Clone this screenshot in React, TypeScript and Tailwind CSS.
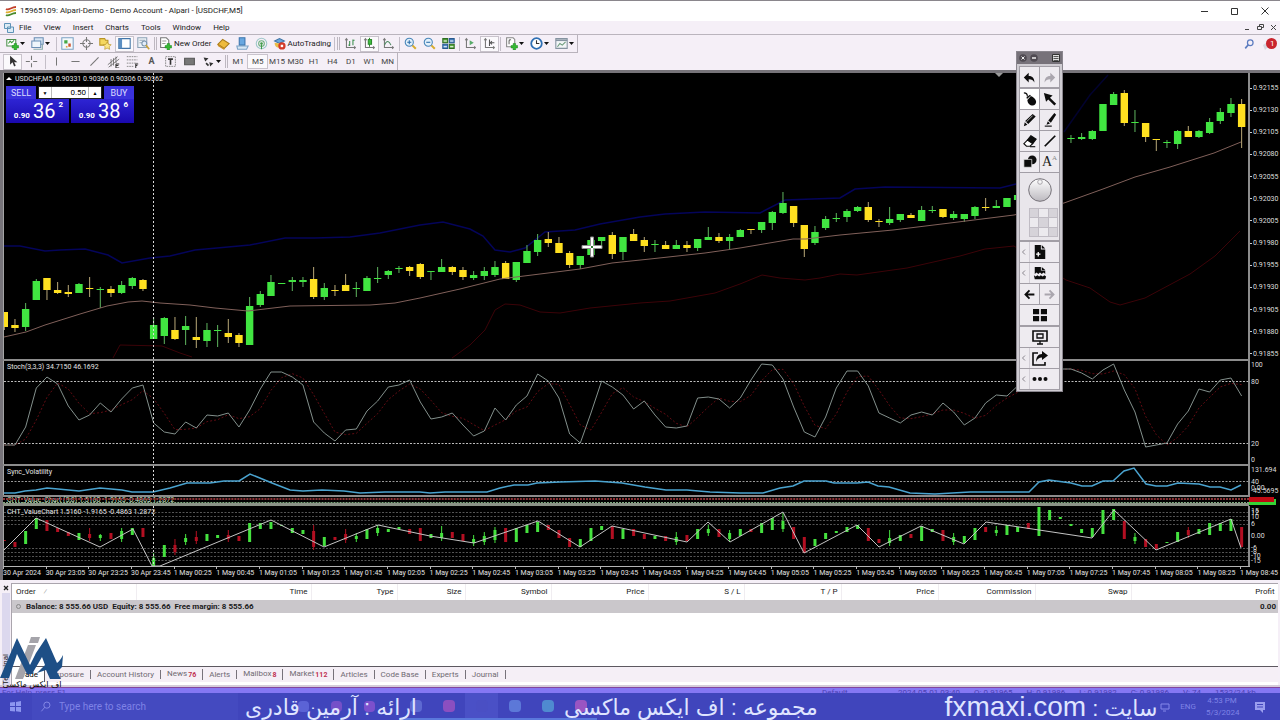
import { ReactNode } from "react";
import clsx from "clsx";

const STEP = 32 / 3;
const px = (i: number) => 4.3 + i * STEP;

// up/down, high, body top, body bottom, low
type Bar = [number, number, number, number, number];

const candles: (Bar | null)[] = [
  [0, 312, 312, 327, 330], [0, 319, 325, 328, 332], [1, 303, 309, 327, 331], [1, 279, 281, 300, 300],
  [0, 278, 278, 290, 300], [0, 282, 290, 293, 294], [0, 285, 292, 294, 297], [1, 283, 284, 293, 293],
  [0, 277, 288, 289, 297], [1, 287, 289, 290, 308], [0, 286, 289, 293, 297], [1, 281, 285, 293, 294],
  [1, 277, 278, 286, 289], [0, 279, 280, 289, 291], [1, 317, 325, 339, 339], [1, 317, 318, 336, 344],
  [0, 317, 330, 339, 340], [1, 316, 326, 330, 345], [0, 317, 337, 340, 348], [1, 323, 330, 341, 347],
  [1, 325, 330, 331, 347], [0, 319, 333, 337, 343], [0, 333, 335, 343, 347], [1, 297, 306, 345, 345],
  [1, 291, 294, 305, 307], [1, 275, 282, 296, 296], [1, 283, 283, 284, 284], [1, 277, 280, 282, 291],
  [1, 277, 280, 282, 287], [0, 267, 279, 297, 299], [1, 283, 288, 297, 300], [0, 285, 290, 291, 296],
  [0, 274, 285, 291, 291], [1, 282, 288, 289, 297], [1, 276, 278, 291, 291], [1, 267, 278, 279, 283],
  [1, 270, 271, 275, 279], [1, 266, 268, 269, 273], [0, 266, 267, 271, 276], [0, 263, 264, 277, 279],
  [1, 271, 271, 272, 280], [1, 259, 267, 272, 272], [0, 266, 267, 272, 275], [0, 267, 270, 277, 280],
  [1, 271, 275, 278, 280], [1, 267, 271, 276, 280], [1, 261, 267, 275, 277], [0, 261, 263, 279, 279],
  [1, 262, 262, 280, 282], [1, 245, 251, 263, 263], [1, 234, 240, 252, 256], [0, 232, 239, 243, 247],
  [0, 237, 243, 253, 253], [0, 251, 253, 265, 268], [1, 256, 256, 265, 269], [1, 238, 240, 255, 257],
  [1, 237, 237, 241, 245], [0, 232, 235, 254, 259], [1, 237, 237, 252, 260], [0, 229, 234, 241, 241],
  [0, 237, 240, 246, 252], [1, 240, 244, 245, 252], [0, 241, 245, 249, 249], [1, 240, 245, 249, 249],
  [0, 241, 245, 248, 252], [1, 239, 239, 248, 251], [1, 227, 237, 240, 240], [0, 233, 237, 241, 243],
  [1, 234, 237, 241, 249], [1, 229, 230, 237, 237], [0, 229, 229, 230, 234], [1, 222, 222, 230, 233],
  [1, 211, 212, 223, 230], [1, 192, 203, 213, 214], [0, 206, 206, 223, 227], [0, 225, 225, 249, 257],
  [1, 226, 232, 243, 245], [1, 216, 219, 228, 230], [1, 213, 218, 219, 222], [1, 209, 211, 217, 222],
  [1, 206, 207, 211, 212], [0, 202, 207, 220, 222], [0, 219, 221, 222, 227], [1, 207, 219, 223, 225],
  [1, 214, 214, 220, 222], [0, 213, 215, 218, 218], [1, 206, 210, 221, 221], [1, 206, 210, 211, 213],
  [0, 209, 209, 217, 218], [1, 211, 214, 218, 220], [1, 214, 214, 219, 222], [1, 206, 207, 216, 219],
  [0, 198, 207, 208, 211], [1, 200, 206, 208, 208], [1, 198, 198, 207, 207], [1, 194, 195, 200, 200],
  null, null, null, null,
  [1, 135, 138, 139, 143], [1, 133, 137, 139, 140], [1, 130, 131, 139, 140], [1, 104, 104, 131, 131],
  [1, 92, 94, 105, 105], [0, 90, 93, 123, 126], [1, 110, 122, 123, 132], [0, 123, 123, 137, 142],
  [0, 139, 139, 140, 151], [1, 140, 142, 143, 148], [1, 130, 131, 144, 149], [0, 126, 131, 137, 137],
  [1, 130, 131, 137, 138], [1, 118, 122, 133, 134], [1, 108, 112, 121, 124], [1, 98, 104, 113, 117],
  [0, 99, 104, 127, 148],
];

const stoch = [
  445, 445, 427, 388, 377, 384, 406, 420, 415, 403, 412, 399, 388, 385, 423, 432, 434, 422, 428, 415,
  416, 413, 427, 410, 389, 372, 372, 377, 385, 422, 433, 441, 430, 429, 411, 401, 387, 385, 380, 402,
  419, 417, 413, 425, 436, 431, 408, 420, 405, 396, 374, 381, 398, 434, 443, 413, 381, 387, 395, 409,
  401, 415, 427, 428, 426, 398, 397, 399, 408, 398, 380, 364, 365, 379, 407, 432, 437, 417, 388, 371,
  371, 386, 413, 418, 423, 415, 412, 415, 403, 412, 425, 418, 403, 395, 396, 386, 375, 370, 369, 369,
  369, 373, 379, 370, 364, 390, 412, 447, 445, 443, 424, 411, 389, 392, 380, 378, 396,
];

// up/down, top, bottom, wick top
const valueBars: [number, number, number, number?][] = [
  [0, 540, 541], [0, 542, 547], [1, 531, 544], [1, 518, 529], [0, 520, 531], [0, 528, 532], [0, 532, 536],
  [1, 533, 540], [0, 534, 538, 528], [1, 535, 538, 534], [0, 533, 539], [1, 531, 539, 528], [1, 528, 535],
  [0, 528, 537], [1, 558, 566, 553], [1, 545, 557], [0, 545, 552, 539], [1, 538, 542, 534],
  [0, 537, 541, 531], [1, 534, 541], [1, 535, 538], [0, 535, 539, 530], [0, 536, 541], [1, 523, 542],
  [1, 523, 529], [1, 522, 529], [1, 525, 526], [1, 528, 533], [1, 530, 534], [0, 531, 547, 525],
  [1, 537, 546], [0, 537, 540], [0, 534, 540, 529], [1, 536, 539, 533], [1, 529, 539], [1, 528, 533, 525],
  [1, 529, 532], [1, 527, 529], [0, 529, 534], [0, 528, 541], [1, 534, 538], [1, 533, 538, 526],
  [0, 532, 538], [0, 534, 541], [1, 539, 543, 535], [1, 536, 542, 532], [1, 530, 540, 527],
  [0, 528, 542], [1, 528, 542], [1, 525, 533], [1, 522, 532], [0, 525, 530], [0, 530, 538], [0, 538, 547],
  [1, 539, 547], [1, 528, 541], [1, 526, 530], [0, 526, 539], [1, 529, 539], [0, 529, 536], [0, 534, 539],
  [1, 536, 539], [0, 536, 541], [1, 537, 542, 532], [0, 535, 541], [1, 529, 539], [1, 529, 533, 525],
  [0, 529, 537], [1, 533, 539, 530], [1, 529, 536], [0, 529, 532], [1, 523, 533], [1, 518, 530],
  [1, 521, 529, 513], [0, 527, 539], [0, 537, 553], [1, 539, 546], [1, 533, 539], [1, 531, 533],
  [1, 527, 532], [1, 525, 529], [0, 528, 541], [0, 539, 543], [1, 538, 543, 530], [1, 535, 541],
  [0, 534, 538], [1, 526, 541], [1, 529, 532], [0, 530, 541], [1, 537, 542, 533], [1, 536, 543],
  [1, 528, 540], [0, 527, 532], [1, 530, 533, 526], [1, 525, 535], [1, 527, 532], [0, 523, 529],
  [1, 507, 536], [1, 510, 520], [1, 517, 519], [1, 524, 526], [1, 529, 533], [1, 528, 537],
  [1, 510, 534], [1, 509, 520], [0, 521, 539], [1, 537, 541, 533], [0, 539, 547], [0, 544, 549],
  [1, 542, 543], [1, 532, 542], [0, 530, 535, 527], [1, 529, 534], [1, 523, 535], [1, 523, 531],
  [1, 519, 531], [0, 527, 547],
];

const average =
  "4,337 26,332 45,325 80,314 107,306 128,302 142,301 160,303 190,305 215,308 248,311 290,306 370,305 395,303 420,298 460,289 500,279 540,274 580,269 612,263 650,259 705,253 740,248 793,239 806,239 840,235 893,230 950,223 1014,215 1064,203 1103,189 1135,177 1170,167 1214,153 1241,142";
const upperBand =
  "4,246 20,246 45,251 60,250 85,249 108,255 122,263 150,258 170,256 195,250 250,245 285,238 315,238 350,237 380,233 400,229 420,225 443,222 470,229 483,236 495,250 510,252 525,248 545,232 575,230 600,224 640,217 665,214 705,212 760,213 785,200 840,198 855,189 885,187 1000,188 1016,184";
const upperBandRight = "1064,132 1090,95 1108,75";
const lowerBandLeft = "113,358 120,345 162,346 180,353 192,357";
const lowerBand =
  "452,358 470,345 485,330 495,310 505,304 520,305 540,312 560,313 590,308 640,303 670,301 715,293 740,284 762,275 780,278 805,280 820,278 840,274 857,275 907,268 960,256 985,249 1014,246 1066,280 1090,288 1110,302 1120,305 1145,298 1190,274 1215,256 1240,231";
const volatility =
  "4,493 15,493 25,491 36,490 47,488 58,489 79,491 100,488 122,490 132,492 153,492 170,488 187,483 210,483 224,481 239,481 250,474 272,483 290,490 303,491 322,490 344,491 360,493 385,492 420,492 430,493 445,492 487,492 500,488 514,485 528,485 537,483 560,482 595,481 622,483 645,487 666,490 687,490 710,492 740,493 763,493 780,488 793,486 804,481 826,481 834,483 857,483 868,482 878,486 889,487 910,493 935,494 970,492 1029,492 1039,482 1049,480 1071,483 1082,486 1092,486 1103,481 1113,481 1124,471 1134,468 1146,484 1156,486 1167,486 1178,483 1199,484 1210,487 1220,487 1231,490 1241,485";
const zigzag =
  "4,550 36,518 100,547 133,529 152,566 160,566 271,520 324,547 378,525 430,536 474,543 538,521 580,547 612,526 687,542 708,522 730,542 783,512 804,553 857,525 879,547 921,526 964,544 986,522 1092,538 1114,510 1156,550 1231,519 1241,548";

const prices = Array.from({ length: 13 }, (_, i) => (0.92155 - i * 0.00025).toFixed(5));

const times = ["30 Apr 2024", "30 Apr 23:05", "30 Apr 23:25", "30 Apr 23:45"].concat(
  Array.from({ length: 26 }, (_, i) => {
    const m = 25 + i * 20;
    return `1 May 0${Math.floor(m / 60)}:${String(m % 60).padStart(2, "0")}`;
  })
);

const stochPoints = stoch.map((y, i) => `${px(i)},${y}`).join(" ");
const signalPoints = stoch
  .map((y, i) => `${px(i)},${(y + stoch[Math.max(0, i - 1)] + stoch[Math.max(0, i - 2)]) / 3}`)
  .join(" ");

function Panel({ top, height, label, axis, children }: {
  top: number;
  height: string;
  label?: string;
  axis?: ReactNode;
  children: ReactNode;
}) {
  const h = Number(height.match(/\d+/)![0]);
  return (
    <div className={clsx("flex", height)}>
      <div className="relative min-w-0 flex-1 border-l border-[#a5a5a5]">
        <svg className="block h-full w-full" viewBox={`4 ${top} 1244 ${h}`} preserveAspectRatio="none">
          {children}
          <line x1="153.5" x2="153.5" y1={top} y2={top + h} stroke="#d8d8d8" strokeDasharray="2 2" />
        </svg>
        {label && <div className="absolute left-[3px] top-[2px] whitespace-pre text-[#e4e4e4]">{label}</div>}
      </div>
      <div className="relative w-[32px] border-l-2 border-[#8c8c8c] text-[#dedede]">{axis}</div>
    </div>
  );
}

const Split = () => <div className="mr-[30px] h-[2px] bg-[#8c8c8c]" />;

function Level({ y, color = "#bdbdbd" }: { y: number; color?: string }) {
  return <line x1="4" x2="1248" y1={y} y2={y} stroke={color} strokeDasharray="2 1.5" />;
}

function OneClick() {
  return (
    <div className="absolute left-[3px] top-[13px] w-[128px] text-[#dcdcff]">
      <div className="flex justify-between text-[9px] leading-[12px]">
        <button className="w-[30px] bg-[#3a32dc]">SELL</button>
        <div className="flex w-[64px] items-center border border-[#202020] bg-white text-black">
          <button aria-label="Decrease volume" className="w-[12px] text-[5px] leading-[10px]">▼</button>
          <input aria-label="Volume" defaultValue="0.50" className="h-[11px] w-[38px] border-x border-[#bbb] pr-[2px] text-right text-[8px]" />
          <button aria-label="Increase volume" className="w-[12px] text-[5px] leading-[10px]">▲</button>
        </div>
        <button className="w-[30px] bg-[#3a32dc]">BUY</button>
      </div>
      <div className="flex justify-between text-white">
        {[["36", "2"], ["38", "6"]].map(([big, pip]) => (
          <button key={big} className="flex h-[24px] w-[63px] items-end justify-end gap-[3px] bg-linear-to-b from-[#2e24d4] to-[#1a08ae] pr-[6px]">
            <span className="pb-[3px] text-[8px] font-bold leading-[8px]">0.90</span>
            <span className="text-[20px] leading-[23px]">{big}</span>
            <span className="self-start pt-[2px] text-[8px] font-bold leading-[8px]">{pip}</span>
          </button>
        ))}
      </div>
    </div>
  );
}

function Charts() {
  return (
    <section className="relative border-l-[3px] border-t-[3px] border-[#77747a] bg-black text-[7px] leading-[8px]">
      <div className="relative">
        <Panel
          top={73}
          height="h-[286px]"
          axis={
            <div className="flex h-full flex-col justify-between pb-px pt-[11px]">
              {prices.map((p) => (
                <div key={p} className="flex items-center gap-px">
                  <span className="h-px w-[2px] bg-[#ccc]" />
                  {p}
                </div>
              ))}
            </div>
          }
        >
          <polyline points={upperBand} fill="none" stroke="#04045a" strokeWidth="1.5" />
          <polyline points={upperBandRight} fill="none" stroke="#02022e" strokeWidth="1.5" />
          <polyline points={lowerBandLeft} fill="none" stroke="#3c0308" />
          <polyline points={lowerBand} fill="none" stroke="#3c0308" />
          {candles.map((c, i) => {
            if (!c) return null;
            const [up, high, top, bottom, low] = c;
            return (
              <g key={i} fill={up ? "#41e541" : "#ffe020"}>
                <rect x={px(i) - 0.5} y={high} width="1" height={low - high} fill={up ? "#5fb55f" : "#b9a878"} />
                <rect x={px(i) - 3.7} y={top} width="7.4" height={bottom - top} />
              </g>
            );
          })}
          <polyline points={average} fill="none" stroke="#80605a" />
          <path d="M995 73h8l-4 4z" fill="#9a9a9a" />
          <path d="M590.500 237h3v8.500h8.500v3h-8.500v8.500h-3v-8.500h-8.500v-3h8.500z" fill="#fff" stroke="#8d8d8d" />
          <path d="M591 246h2v2h-2z" fill="#2f7a2f" />
        </Panel>
        <div className="absolute left-[3px] top-[2px] flex items-center gap-[3px] whitespace-pre text-[#e4e4e4]">
          <svg width="6" height="4"><path d="M3 0l3 3H0z" fill="#fff" /></svg>
          {"USDCHF,M5  0.90331 0.90366 0.90306 0.90362"}
        </div>
        <OneClick />
      </div>
      <Split />
      <Panel
        top={361}
        height="h-[103px]"
        label="Stoch(3,3,3) 34.7150 46.1692"
        axis={
          <div>
            <span className="absolute left-px top-0">100</span>
            <span className="absolute left-px top-[17px]">80</span>
            <span className="absolute left-px top-[79px]">20</span>
            <span className="absolute left-px top-[95px]">0</span>
          </div>
        }
      >
        <Level y={381.5} />
        <Level y={443.5} />
        <polyline points={signalPoints} fill="none" stroke="#620c13" strokeDasharray="2 2" />
        <polyline points={stochPoints} fill="none" stroke="#83908c" />
      </Panel>
      <Split />
      <Panel
        top={466}
        height="h-[29px]"
        label="Sync_Volatility"
        axis={
          <div>
            <span className="absolute left-px top-0">131.694</span>
            <span className="absolute left-px top-[12px]">40</span>
            <span className="absolute left-px top-[18px]">0.00</span>
            <span className="absolute left-px top-[21px]">-45.5695</span>
          </div>
        }
      >
        <Level y={481.5} color="#999" />
        <polyline points={volatility} fill="none" stroke="#4aa3cf" strokeWidth="1.5" />
      </Panel>
      <Split />
      <div className="relative flex h-[9px]">
        <div className="relative min-w-0 flex-1 border-b-[3px] border-[#8b9387]">
          <div className="whitespace-pre pl-[4px] leading-[7px] text-[#cfe8c8]">CHT_Value_Chart (5,8) 1.5160 -1.9165 -0.4863 1.2872</div>
          <svg className="absolute inset-0 h-[6px] w-full" viewBox="4 497 1244 6" preserveAspectRatio="none">
            <line x1="4" x2="1248" y1="499" y2="499" stroke="#8c3438" strokeWidth="2" strokeDasharray="2 1" />
            <line x1="4" x2="1248" y1="502.500" y2="502.500" stroke="#7fa87f" strokeDasharray="2 1" />
          </svg>
        </div>
        <div className="relative w-[31px]">
          <div className="absolute left-0 top-[2px] h-[6px] w-[27px] bg-[#35d435]" />
          <div className="absolute left-0 top-0 h-[5px] w-[25px] bg-[#c00a12]" />
        </div>
      </div>
      <Panel
        top={506}
        height="h-[60px]"
        label="CHT_ValueChart 1.5160 -1.9165 -0.4863 1.2872"
        axis={
          <div>
            <span className="absolute left-px top-px">15</span>
            <span className="absolute left-px top-[3px]">12</span>
            <span className="absolute left-px top-[7px]">10</span>
            <span className="absolute left-px top-[14px]">6</span>
            <span className="absolute left-px top-[26px]">0.00</span>
            <span className="absolute left-px top-[38px]">-6</span>
            <span className="absolute left-px top-[42px]">-8</span>
            <span className="absolute left-px top-[46px]">-10</span>
            <span className="absolute left-px top-[51px]">-15</span>
          </div>
        }
      >
        {[512.5, 516.5, 520.5, 524.5, 548.5, 552.5, 556.5, 560.5].map((y) => (
          <Level key={y} y={y} color="#555" />
        ))}
        {valueBars.map(([up, top, bottom, wick], i) => (
          <g key={i} fill={up ? "#45e23f" : "#b30f22"}>
            <rect x={px(i) - 1.5} y={top} width="3" height={bottom - top} />
            {wick && <rect x={px(i) - 0.5} y={wick} width="1" height={bottom - wick + 3} />}
          </g>
        ))}
        <polyline points={zigzag} fill="none" stroke="#c4c4c4" />
      </Panel>
      <div className="mr-[30px] h-px bg-[#b5b5b5]" />
      <div className="flex h-[13px] overflow-hidden text-[#e2e2e2]">
        {times.map((t) => (
          <div key={t} className="shrink-0 whitespace-nowrap" style={{ width: `${((STEP * 4) / 1277) * 100}%` }}>
            <div className="h-[2px] w-px bg-[#b5b5b5]" />
            {t}
          </div>
        ))}
      </div>
    </section>
  );
}

function Icon({ children, box = 16, size = "size-[13px]" }: { children: ReactNode; box?: number; size?: string }) {
  return (
    <svg viewBox={`0 0 ${box} ${box}`} className={clsx("shrink-0", size)} fill="none" strokeWidth="1.3">
      {children}
    </svg>
  );
}

function Tool({ name, on, menu, children }: { name: string; on?: boolean; menu?: boolean; children: ReactNode }) {
  return (
    <button
      aria-label={name}
      className={clsx(
        "flex h-[16px] shrink-0 items-center justify-center",
        menu ? "w-[25px] gap-px" : "w-[19px]",
        on && "border border-[#c9c3cc] bg-[#fbf9fc]"
      )}
    >
      {children}
      {menu && <svg viewBox="0 0 5 3" className="h-[3px] w-[5px]"><path d="M0 0h5L2.500 3z" fill="#111" /></svg>}
    </button>
  );
}

const Sep = () => <span className="mx-px h-[14px] w-px shrink-0 bg-[#c4bec8]" />;
const Grip = () => <span className="mx-px h-[13px] w-[3px] shrink-0 border-x border-[#bdb7c0]" />;

const plus = <path d="M10 8h3v2.500h2.500v3H13V16h-3v-2.500H7.500v-3H10z" fill="#35b932" stroke="#15801a" strokeWidth=".6" />;
const axes = <path d="M3 2v11h11M1.500 4L3 2l1.500 2M12.500 11.500L14 13l-1.500 1.500" stroke="#777" />;

function MainToolbar() {
  return (
    <div className="flex">
      <div className="flex h-[18px] items-center border-b border-r border-[#b9b3bc] pl-[3px]">
        <Tool name="New chart" menu>
          <Icon><path d="M1 3h11v8H1z" fill="#fff" stroke="#4c8f4c" /><path d="M3 8l2-3 2 2 3-3" stroke="#3a9a3a" />{plus}</Icon>
        </Tool>
        <Tool name="Profiles" menu>
          <Icon><path d="M4 1h11v8H4z" fill="#d8e6f4" stroke="#6b8fb5" /><path d="M1 5h11v8H1z" fill="#eef5fb" stroke="#6b8fb5" /><path d="M3 15h11v-6" stroke="#8aa" /></Icon>
        </Tool>
        <span className="w-[2px]" />
        <Sep />
        <Tool name="Market watch">
          <Icon><path d="M1 1h14v14H1z" fill="#f4f8fb" stroke="#7ba3c4" /><path d="M4 4h4v4H4z" fill="#45a843" /><path d="M9 8h3v4H9z" fill="#d0542e" /><path d="M6 11h2v2H6z" fill="#e0a23c" /></Icon>
        </Tool>
        <Tool name="Data window">
          <Icon><circle cx="8" cy="8" r="4.500" stroke="#777" /><path d="M8 0v6M8 10v6M0 8h6M10 8h6" stroke="#777" /></Icon>
        </Tool>
        <Tool name="Navigator">
          <Icon><path d="M1 2h6l1 2h3v6H1z" fill="#f5d860" stroke="#b99425" /><path d="M10 6l1.600 3 3.400.5-2.500 2.300.6 3.400-3.100-1.600-3 1.600.5-3.400L5 9.500 8.500 9z" fill="#fbe68a" stroke="#b99425" strokeWidth=".8" /></Icon>
        </Tool>
        <Tool name="Terminal" on>
          <Icon><path d="M1 2h14v12H1z" fill="#fff" stroke="#4375a8" /><path d="M1 2h4v12H1z" fill="#5c8fc2" /></Icon>
        </Tool>
        <Tool name="Strategy tester">
          <Icon><path d="M1 1h11v12H1z" fill="#eef3f7" stroke="#8ba1b5" /><path d="M3 4h7M3 7h4" stroke="#9ab" /><circle cx="9" cy="8" r="3" fill="#e4eefa" stroke="#7a94ad" /><path d="M11 10l4 5" stroke="#c9a23a" strokeWidth="2" /></Icon>
        </Tool>
        <Grip />
        <button className="flex items-center whitespace-nowrap pl-px">
          <Icon><path d="M2 1h7l3 3v9H2z" fill="#fff" stroke="#777" /><path d="M4 5h5M4 8h4" stroke="#999" />{plus}</Icon>
          <span className="px-[2px]">New Order</span>
        </button>
        <Tool name="MetaEditor">
          <Icon><path d="M1 9l6-6 8 5-6 6z" fill="#eebb3e" stroke="#a87b1d" /><path d="M1 9l8 5v2L1 11z" fill="#c88f22" /></Icon>
        </Tool>
        <Tool name="Community">
          <Icon><path d="M4 1h7v9H4z" fill="#68a7e0" stroke="#3b75ad" /><path d="M1 11h14l-2 4H2z" fill="#d7e7f5" stroke="#7da3c6" /></Icon>
        </Tool>
        <Tool name="Signals">
          <Icon><circle cx="8" cy="8" r="6.500" stroke="#9dc6c8" /><circle cx="8" cy="8" r="3.500" stroke="#6bb07c" /><circle cx="8" cy="8" r="1.600" fill="#3f9b48" /><path d="M8 9v6" stroke="#3f9b48" /></Icon>
        </Tool>
        <button className="flex items-center whitespace-nowrap pl-[2px]">
          <Icon><path d="M2 5l6-3 6 3-6 3z" fill="#6da8dd" stroke="#3f74a5" /><path d="M2 7c0 5 3 6 6 6V8z" fill="#e8bd47" /><circle cx="11" cy="11" r="4.500" fill="#d43b28" /><path d="M9.500 9.500h3v3h-3z" fill="#fff" /></Icon>
          <span className="px-[2px]">AutoTrading</span>
        </button>
        <Sep />
        <Grip />
        <Tool name="Bar chart"><Icon>{axes}<path d="M7 5v6M7 10H5.500M11 3v7M11 4h2" stroke="#3a8f4c" /></Icon></Tool>
        <Tool name="Candlesticks" on><Icon>{axes}<path d="M8 1v11" stroke="#2d8a2d" /><path d="M6.500 3h4v6h-4z" fill="#3fbe3f" stroke="#2d8a2d" /></Icon></Tool>
        <Tool name="Line chart"><Icon>{axes}<path d="M3 10c3-7 6-5 8 0" stroke="#4d8a60" /></Icon></Tool>
        <Sep />
        <Tool name="Zoom in"><Icon><path d="M10 10l4.500 4.500" stroke="#d8ac30" strokeWidth="2.500" /><circle cx="6.500" cy="6.500" r="5" fill="#e3f1fb" stroke="#4684b8" /><path d="M4 6.500h5M6.500 4v5" stroke="#2c6ca8" /></Icon></Tool>
        <Tool name="Zoom out"><Icon><path d="M10 10l4.500 4.500" stroke="#d8ac30" strokeWidth="2.500" /><circle cx="6.500" cy="6.500" r="5" fill="#e3f1fb" stroke="#4684b8" /><path d="M4 6.500h5" stroke="#2c6ca8" /></Icon></Tool>
        <Tool name="Tile windows"><Icon><path d="M1 2h6v5H1zM9 9h6v5H9z" fill="#57a83d" stroke="#2d6d22" /><path d="M9 2h6v5H9zM1 9h6v5H1z" fill="#4a86c4" stroke="#28598e" /><path d="M2 5h4M10 5h4M2 12h4M10 12h4" stroke="#fff" /></Icon></Tool>
        <Sep />
        <Tool name="Auto scroll"><Icon>{axes}<path d="M7 4l5 3-5 3z" fill="#59ab6a" /></Icon></Tool>
        <Tool name="Chart shift" on><Icon>{axes}<path d="M8 3v8M14 7H9M11 5L9 7l2 2" stroke="#555" /></Icon></Tool>
        <Sep />
        <Tool name="Indicators" menu><Icon><path d="M2 1h8l2 2v9H2z" fill="#fff" stroke="#888" /><path d="M5 9V5c0-2 2-2 2-1" stroke="#666" />{plus}</Icon></Tool>
        <Tool name="Periods" menu><Icon><circle cx="8" cy="8" r="6.500" fill="#fff" stroke="#2f70b4" strokeWidth="2.200" /><path d="M8 4v4h3.500" stroke="#333" /></Icon></Tool>
        <Tool name="Templates" menu><Icon><path d="M1 2h14v12H1z" fill="#f2f5f7" stroke="#8593a0" /><path d="M1 4h14" stroke="#8593a0" strokeWidth="2" /><path d="M3 12l3-4 3 2 4-4" stroke="#6a9a7a" /></Icon></Tool>
      </div>
    </div>
  );
}

function LineToolbar() {
  const g = "#777";
  return (
    <div className="flex h-[17px] items-center">
      <div className="flex items-center pl-[3px]">
        <Tool name="Cursor" on><Icon><path d="M5 1v11l3-3 2 5 2-1-2-4h4z" fill="#333" /></Icon></Tool>
        <Tool name="Crosshair"><Icon><path d="M8 1v5M8 10v5M1 8h5M10 8h5" stroke={g} /></Icon></Tool>
        <span className="w-[3px]" />
        <Sep />
        <Tool name="Vertical line"><Icon><path d="M8 3v10" stroke={g} /></Icon></Tool>
        <Tool name="Horizontal line"><Icon><path d="M3 8h10" stroke={g} /></Icon></Tool>
        <Tool name="Trendline"><Icon><path d="M3 13L13 3" stroke={g} /></Icon></Tool>
        <Tool name="Channel"><Icon><path d="M1 12L13 2M2 15L15 5M5 5v9M8 4v9M11 2v8" stroke="#666" strokeWidth="1" /><path d="M11 11h4M11 13h3M11 11v5h4" stroke="#333" /></Icon></Tool>
        <Tool name="Fibonacci"><Icon><path d="M1 2h13M1 6h13M1 10h13M1 14h8" stroke={g} strokeDasharray="2 1" strokeWidth="1" /><path d="M12 16v-5h3M12 13h2" stroke="#333" /></Icon></Tool>
        <Tool name="Text"><span className="text-[9px] font-bold text-[#555]">A</span></Tool>
        <Tool name="Label"><Icon><path d="M2 2h12v12H2z" stroke={g} strokeDasharray="2 1" strokeWidth="1" /><path d="M5 5h6M8 5v7" stroke="#333" strokeWidth="2" /></Icon></Tool>
        <Tool name="Shapes"><Icon><path d="M2 4h12v8H2z" fill="#777" stroke="#555" /></Icon></Tool>
        <Tool name="Arrows" menu><Icon><path d="M2 3l6 1-4 4zM9 9l5 1-4 4z" fill="#333" /><path d="M5 10l3 3" stroke="#333" strokeWidth="2" /></Icon></Tool>
        <Grip />
      </div>
      <div className="flex h-full w-[169px] items-center border-r border-[#b9b3bc]">
        {["M1", "M5", "M15", "M30", "H1", "H4", "D1", "W1", "MN"].map((p) => (
          <button
            key={p}
            className={clsx("h-[15px] min-w-0 flex-1 text-[#444]", p === "M5" && "border border-[#c9c3cc] bg-[#fbf9fc]")}
          >
            {p}
          </button>
        ))}
      </div>
    </div>
  );
}

function Header() {
  return (
    <header className="text-[8px]">
      <div className="flex h-[21px] items-center border-t border-[#8a868c] bg-white pl-[5px]">
        <svg viewBox="0 0 12 12" className="size-[12px]" fill="none" strokeWidth="1.800">
          <path d="M1 4c3 2 5-2 10-2" stroke="#c2402b" />
          <path d="M1 7c3 2 5-2 10-2" stroke="#e0ae2f" />
          <path d="M1 10c3 2 5-2 10-2" stroke="#4b8b2d" />
        </svg>
        <span className="flex-1 pl-[3px]">15965109: Alpari-Demo - Demo Account - Alpari - [USDCHF,M5]</span>
        <div className="flex">
          <button aria-label="Minimize" className="flex w-[30px] justify-center"><svg width="8" height="8"><path d="M0 4.500h7" stroke="#333" /></svg></button>
          <button aria-label="Maximize" className="flex w-[30px] justify-center"><svg width="8" height="8"><path d="M.5 1.500h6v6h-6z" stroke="#333" fill="none" /></svg></button>
          <button aria-label="Close" className="flex w-[30px] justify-center"><svg width="8" height="8"><path d="M.5.500l7 7M7.500.500l-7 7" stroke="#333" /></svg></button>
        </div>
      </div>
      <div className="flex h-[14px] items-center border-b border-[#bab4bd] pl-[4px]">
        <svg viewBox="0 0 10 10" className="size-[10px]"><path d="M.5.500h6v5h-6zM3.500 4h6v5.500h-6z" fill="#dcebf5" stroke="#5e93b8" /></svg>
        <nav className="flex flex-1 gap-[12px] pl-[5px]">
          {["File", "View", "Insert", "Charts", "Tools", "Window", "Help"].map((m) => (
            <button key={m}>{m}</button>
          ))}
        </nav>
        <div className="flex gap-[6px] pr-[3px]">
          <button aria-label="Minimize chart"><svg width="7" height="7"><path d="M1 5.500h4" stroke="#444" /></svg></button>
          <button aria-label="Restore chart"><svg width="7" height="7"><path d="M.5 2.500h4v3h-4zM2.500 2.500v-2h4v3h-2" stroke="#444" fill="none" /></svg></button>
          <button aria-label="Close chart"><svg width="7" height="7"><path d="M1 1l5 5M6 1L1 6" stroke="#444" /></svg></button>
        </div>
      </div>
      <div className="flex justify-between">
        <div>
          <MainToolbar />
          <LineToolbar />
        </div>
        <div className="flex h-[17px] items-center gap-[8px] pr-[3px]">
          <button aria-label="Search"><Icon size="size-[10px]"><circle cx="10" cy="6" r="4.500" stroke="#5c7cc0" strokeWidth="2" /><path d="M7 9l-5 6" stroke="#5c7cc0" strokeWidth="2.500" /></Icon></button>
          <button aria-label="Notifications" className="relative h-[12px] w-[15px]">
            <svg viewBox="0 0 15 12" className="h-[12px] w-[15px]"><path d="M1 7l6-4 3 5-5 2-2 2z" fill="#d5d8e0" /><circle cx="9.500" cy="5.500" r="5.500" fill="#c9242d" /></svg>
            <span className="absolute left-[8px] top-px leading-[9px] text-white">1</span>
          </button>
        </div>
      </div>
    </header>
  );
}

const columns: [string, string][] = [
  ["Time", "w-[175px]"], ["Type", "w-[86px]"], ["Size", "w-[68px]"], ["Symbol", "w-[86px]"],
  ["Price", "w-[97px]"], ["S / L", "w-[96px]"], ["T / P", "w-[97px]"], ["Price", "w-[97px]"],
  ["Commission", "w-[97px]"], ["Swap", "w-[96px]"], ["Profit", "w-[147px]"],
];

const tabs: [string, string?][] = [
  ["Exposure"], ["Account History"], ["News", "76"], ["Alerts"], ["Mailbox", "8"], ["Market", "112"],
  ["Articles"], ["Code Base"], ["Experts"], ["Journal"],
];

function Terminal() {
  return (
    <section className="relative flex min-h-0 flex-1 border-b-2 border-[#d5ccd9] pt-[3px] text-[8px]">
      <div className="flex w-[11px] flex-col items-center">
        <button aria-label="Close terminal" className="py-px"><svg width="6" height="8"><path d="M1 2l4 4M5 2L1 6" stroke="#222" strokeWidth="1.300" /></svg></button>
        <div className="w-[8px] flex-1 bg-[#dcd8ee] text-left leading-[8px] [writing-mode:sideways-lr]">
          Terminal
        </div>
      </div>
      <div className="mr-[2px] flex min-w-0 flex-1 flex-col border-l border-t border-[#aaa5ad] bg-white">
        <table className="w-full table-fixed border-collapse leading-[12px]">
          <thead>
            <tr className="h-[16px]">
              <th className="w-[124px] border-r border-[#f0edf1] pl-[4px] text-left font-normal">
                Order <span className="pl-[6px] text-[#999]">⁄</span>
              </th>
              {columns.map(([name, w], i) => (
                <th key={i} className={clsx("border-r border-[#f0edf1] pr-[3px] text-right font-normal", w)}>{name}</th>
              ))}
            </tr>
          </thead>
          <tbody>
            <tr className="h-[13px] bg-[#cac7cb] font-bold">
              <td colSpan={11} className="whitespace-pre pl-[4px]">
                <span className="mr-[5px] inline-block size-[5px] rounded-full border border-[#888]" />
                {"Balance: 8 555.66 USD  Equity: 8 555.66  Free margin: 8 555.66"}
              </td>
              <td className="pr-[2px] text-right">0.00</td>
            </tr>
          </tbody>
        </table>
        <div className="flex-1" />
        <div className="mb-[3px] flex h-[16px] items-center border-t border-[#5d5960] bg-[#f5eff6] text-[#6f6a72]">
          <button className="h-full w-[33px] border-r border-[#5d5960] bg-white text-black">Trade</button>
          {tabs.map(([name, count]) => (
            <button key={name} className="flex whitespace-nowrap border-r border-[#77727a] px-[6px] leading-[9px]">
              {name}
              {count && <span className="pl-px pt-[2px] text-[7px] font-bold text-[#c03050]">{count}</span>}
            </button>
          ))}
        </div>
      </div>
      <div className="absolute left-0 top-[57px] z-10 w-[64px]">
        <svg viewBox="0 0 64 42" className="block h-[42px] w-[64px]">
          <path d="M31 0h9l-2 6h-9zM28 8h8L23 42h-8z" fill="#a5a4aa" />
          <path d="M0 41L17 1l13 27 6-12L46 1l11 25q3-2 6-8l-1 12-5 5 4 7H50l-4-9-9 3 8-8-3-8-10 17-5 0L17 17 9 41z" fill="#1d4f86" />
        </svg>
        <div dir="rtl" className="whitespace-nowrap text-center font-['DejaVu_Sans'] leading-[12px] text-black">اف ایکس ماکسی</div>
      </div>
    </section>
  );
}

const tray = ["2024.05.01 03:40", "O: 0.91965", "H: 0.91986", "L: 0.91982", "C: 0.91986", "V: 74", "1532/24 kb"];
const apps = ["bg-[#5d69d2]", "bg-[#8b4fc0]", "bg-[#4a4fc4]", "bg-[#5c78d8]", "bg-[#4f8ad0]", "bg-[#9a55c2]"];

function Footer() {
  return (
    <footer className="text-[8px]">
      <div className="flex h-[6px] items-start justify-between overflow-hidden border-t border-[#82459f] bg-[#8577f3] leading-[9px] text-[#4c42b4]">
        <span className="w-[822px] whitespace-nowrap pl-[2px]">For Help, press F1</span>
        <span className="flex-1">Default</span>
        <div className="flex w-[382px] gap-[14px] whitespace-nowrap">
          {tray.map((t, i) => <span key={i}>{t}</span>)}
        </div>
      </div>
      <div className="relative flex h-[27px] items-center bg-[#4045bc] text-[#7f83e6]">
        <button aria-label="Start" className="w-[32px] pl-[10px]">
          <svg viewBox="0 0 11 11" className="size-[11px]"><path d="M0 1.500L5 1v4H0zM6 1l5-1v5H6zM0 6h5v4.500L0 10zM6 6h5v5l-5-.7z" fill="#8d96f0" /></svg>
        </button>
        <label className="flex h-full w-[206px] items-center gap-[8px] bg-[#444ac0] pl-[8px]">
          <Icon size="size-[11px]"><circle cx="10" cy="6" r="4.500" stroke="#8a8eea" /><path d="M7 9l-5 6" stroke="#8a8eea" /></Icon>
          <input aria-label="Search" placeholder="Type here to search" className="w-[120px] bg-transparent text-[10px] placeholder:text-[#7f83e6]" />
        </label>
        <div className="flex gap-[22px] pl-[60px]">
          {["bg-[#5b63d6]", "bg-[#7550c8]", "bg-[#7c50cc]"].map((c) => <span key={c} className={clsx("size-[11px] rounded-sm", c)} />)}
        </div>
        <div className="flex h-full flex-1 pl-[24px]">
          {apps.map((c, i) => (
            <button key={i} aria-label={`App ${i + 1}`} className={clsx("flex w-[33px] items-center justify-center border-b-2 border-[#5a78dc]", i === 2 && "bg-[#4a50c6]")}>
              <span className={clsx("size-[12px] rounded-sm", c)} />
            </button>
          ))}
        </div>
        <div className="flex items-center gap-[10px] pr-[14px]">
          <svg viewBox="0 0 10 10" className="size-[10px]" fill="none" stroke="#8589ea"><path d="M1 2h8v5H1zM3 9h3" /></svg>
          <span>ENG</span>
          <div className="w-[32px] text-center leading-[12px]">4:53 PM<br />5/3/2024</div>
          <svg viewBox="0 0 12 12" className="ml-[6px] size-[12px]"><path d="M1 1h10v8H9v3L6 9H1z" fill="#9a9eef" /><path d="M3 3.500h6M3 6h6" stroke="#4045bc" /></svg>
        </div>
        <div className="absolute inset-0 grid grid-cols-3 items-center whitespace-nowrap pl-[151px] pr-[49px] text-center font-['Liberation_Sans','DejaVu_Sans',sans-serif] text-[22px] leading-[27px] text-[#dfe4ff]">
          <span dir="rtl">ارائه : آرمین قادری</span>
          <span dir="rtl">مجموعه : اف ایکس ماکسی</span>
          <span dir="rtl">سایت : <span className="text-[28px]">fxmaxi.com</span></span>
        </div>
      </div>
    </footer>
  );
}

function Cell({ name, wide, tail, on, children }: { name: string; wide?: boolean; tail?: boolean; on?: boolean; children: ReactNode }) {
  return (
    <button aria-label={name} className={clsx("relative flex h-[20px] items-center justify-center", wide && "col-span-2", on ? "bg-white" : "bg-[#eeebf0]")}>
      {tail && (
        <span className="absolute inset-y-0 left-0 flex w-[10px] items-center border-r border-[#d2ced6] pl-[2px]">
          <svg width="4" height="6"><path d="M3 .5L.5 3 3 5.500" fill="none" stroke="#88848c" /></svg>
        </span>
      )}
      {children}
    </button>
  );
}

const group = "grid grid-cols-2 gap-px bg-[#a29ea6] ring-1 ring-[#a29ea6]";

function Palette() {
  const k = "#0c0c0c";
  return (
    <aside className="absolute right-[217px] top-[51px] w-[47px] border border-[#8a868e] bg-[#cfccd2]">
      <div className="flex h-[12px] items-center gap-[3px] bg-[#77727a] px-[2px]">
        <button aria-label="Close palette"><svg viewBox="0 0 8 8" className="size-[8px]"><circle cx="4" cy="4" r="3.800" fill="#4f4a52" /><path d="M2.500 2.500l3 3M5.500 2.500l-3 3" stroke="#eee" /></svg></button>
        <button aria-label="Collapse palette" className="flex-1"><svg viewBox="0 0 8 8" className="size-[8px]"><circle cx="4" cy="4" r="3.800" fill="#4f4a52" /><path d="M2 4h4" stroke="#eee" strokeWidth="1.500" /></svg></button>
        <button aria-label="Palette menu"><svg viewBox="0 0 8 8" className="size-[8px]"><path d="M.5.500h7v7h-7z" fill="#ddd" stroke="#333" /><path d="M1.500 2.500h5M1.500 4.500h5M1.500 6.500h5" stroke="#333" strokeWidth=".8" /></svg></button>
      </div>
      <div className="flex flex-col gap-[2px] px-[3px] pb-[2px] pt-[3px]">
        <div className={group}>
          <Cell name="Undo"><Icon><path d="M7 2v4c5 0 7 3 7 8-1.500-3-3-4-7-4v4L1 8z" fill={k} /></Icon></Cell>
          <Cell name="Redo"><Icon><path d="M9 2v4c-5 0-7 3-7 8 1.500-3 3-4 7-4v4l6-6z" fill="#aaa6ae" /></Icon></Cell>
        </div>
        <div className={group}>
          <Cell name="Mouse" on><Icon size="size-[14px]"><path d="M4 6l4-3 1 1-4.500 4z" fill={k} /><path d="M9 4.500c3 1 6 4 6 7 0 2-2 4-4 4-3 0-6-3-6-6.500z" fill={k} /><path d="M1 1c3 0 4 1 4 4" stroke={k} /></Icon></Cell>
          <Cell name="Select"><Icon size="size-[14px]"><path d="M1 1l10 3-3 2.500 7 7-2 2-7-7L3.500 11z" fill={k} /></Icon></Cell>
          <Cell name="Pen"><Icon size="size-[14px]"><path d="M11 1l3.500 3L6 12.500 2.500 9zM2 10.500l3 3L1 15z" fill={k} /><path d="M11 3l-7 7" stroke="#eee" strokeWidth=".8" /></Icon></Cell>
          <Cell name="Highlighter"><Icon size="size-[14px]"><path d="M13 0l2 2-6 9-3-2.500zM5.500 9.500L8 12l-4 1.500z" fill={k} /><path d="M2 15h8" stroke={k} /></Icon></Cell>
          <Cell name="Eraser"><Icon size="size-[14px]"><path d="M9 2l6 4-4 5-6-4z" fill={k} stroke={k} /><path d="M5 7l6 4-3 3H4l-3-3z" fill="#fff" stroke={k} /><path d="M8 14.500h6" stroke={k} /></Icon></Cell>
          <Cell name="Line"><Icon size="size-[14px]"><path d="M2 14L14 2" stroke={k} strokeWidth="2" /></Icon></Cell>
          <Cell name="Shapes"><Icon size="size-[14px]"><circle cx="10.500" cy="5.500" r="5" fill={k} /><path d="M1 5h9v9H1z" fill={k} stroke="#eee" strokeWidth=".8" /></Icon></Cell>
          <Cell name="Text"><span className="font-['Liberation_Serif'] text-[14px] leading-[14px]">A</span><span className="self-start pt-[3px] font-['Liberation_Serif'] text-[7px] leading-[7px] text-[#888]">A</span></Cell>
          <div className="col-span-2 flex h-[67px] flex-col items-center gap-[6px] bg-[#e9e6eb] pt-[5px]">
            <svg viewBox="0 0 24 24" className="size-[24px]">
              <defs><linearGradient id="knob" x2="0" y2="1"><stop stopColor="#fff" /><stop offset="1" stopColor="#bcb9bf" /></linearGradient></defs>
              <circle cx="12" cy="12" r="11.300" fill="url(#knob)" stroke="#77737a" />
              <circle cx="12" cy="4" r="2.300" fill="none" stroke="#99959c" strokeWidth=".8" />
            </svg>
            <div className="ml-[8px] grid size-[29px] shrink-0 grid-cols-3 gap-px bg-[#c0bcc4] p-px">
              {Array.from({ length: 9 }, (_, i) => <span key={i} className={i % 2 ? "bg-[#eceaee]" : "bg-[#d6d3d9]"} />)}
            </div>
          </div>
        </div>
        <div className={group}>
          <Cell name="Insert page" wide tail><Icon size="size-[14px]"><path d="M2 0h7v5h5v11H2zM10 0l4 4h-4z" fill={k} /><path d="M6 8v5M3.500 10.500h5" stroke="#fff" strokeWidth="1.500" /></Icon></Cell>
          <Cell name="Split page" wide tail><Icon size="size-[14px]"><path d="M2 1h7v4h5v4l-2-1.500L10 9 8 7.500 6 9 4 7.500 2 9zM10 1l4 3.500h-4zM1 10.500l2 1.500 2-1.500L7 12l2-1.500 2 1.500 2-1.500 2 1.500-1 3H2z" fill={k} /></Icon></Cell>
          <Cell name="Previous page"><Icon><path d="M14 8H3M8 3L3 8l5 5" stroke={k} strokeWidth="2.200" /></Icon></Cell>
          <Cell name="Next page"><Icon><path d="M2 8h11M8 3l5 5-5 5" stroke="#aaa6ae" strokeWidth="2.200" /></Icon></Cell>
          <Cell name="Grid" wide><Icon size="size-[14px]"><path d="M0 1h7v6H0zM9 1h7v6H9zM0 9h7v6H0zM9 9h7v6H9z" fill={k} /></Icon></Cell>
        </div>
        <div className={group}>
          <Cell name="Screen" wide><Icon size="size-[16px]"><path d="M1 2h14v10H1z" stroke={k} strokeWidth="1.600" /><path d="M5 5h6v4H5z" stroke={k} /><path d="M8 12v3M5 15h6" stroke={k} /></Icon></Cell>
          <Cell name="Share" wide tail><Icon size="size-[16px]"><path d="M6 3H1v12h12v-3" stroke={k} strokeWidth="1.600" /><path d="M10 1l6 4.500-6 4.500V7.500C7 7.500 5 9 4 12c0-5 2-8 6-8z" fill={k} /></Icon></Cell>
          <Cell name="More" wide tail><Icon size="size-[16px]"><circle cx="2.500" cy="8" r="2" fill={k} /><circle cx="8" cy="8" r="2" fill={k} /><circle cx="13.500" cy="8" r="2" fill={k} /></Icon></Cell>
        </div>
      </div>
    </aside>
  );
}

export default function App() {
  return (
    <div className="relative flex h-screen flex-col overflow-hidden bg-[#f5eff7] font-[Roboto] text-[#1b1b1b]">
      <Header />
      <Charts />
      <Terminal />
      <Footer />
      <Palette />
    </div>
  );
}
